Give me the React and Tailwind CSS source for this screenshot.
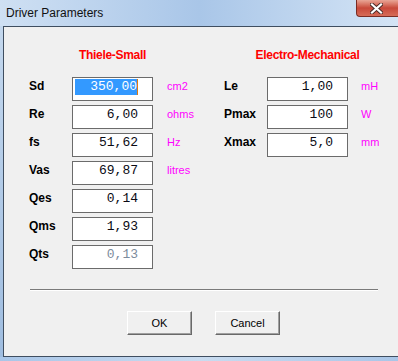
const leftRows = [
  { label: "Sd", value: "350,00", unit: "cm2", selected: true },
  { label: "Re", value: "6,00", unit: "ohms" },
  { label: "fs", value: "51,62", unit: "Hz" },
  { label: "Vas", value: "69,87", unit: "litres" },
  { label: "Qes", value: "0,14" },
  { label: "Qms", value: "1,93" },
  { label: "Qts", value: "0,13", disabled: true },
];

const rightRows = [
  { label: "Le", value: "1,00", unit: "mH" },
  { label: "Pmax", value: "100", unit: "W" },
  { label: "Xmax", value: "5,0", unit: "mm" },
];

function Field({ value, selected, disabled }) {
  return (
    <div className="h-6 w-[81px] border border-[#6b6b6b] bg-white flex justify-end items-start pt-px pr-[14px] font-['Liberation_Mono',monospace] text-[13px]">
      {selected ? (
        <>
          <span className="h-4 leading-4 bg-[#3399ff] text-white whitespace-pre">{"  " + value}</span>
          <span className="h-4 w-px bg-[#e07b10]" />
        </>
      ) : (
        <span className={disabled ? "leading-4 text-[#7c8b9c]" : "leading-4 text-[#0a0a14]"}>{value}</span>
      )}
    </div>
  );
}

function Group({ title, rows, unitGap }) {
  return (
    <div className="flex flex-col">
      <div className="ml-[43px] w-[81px] h-4 flex justify-center">
        <span className="whitespace-nowrap leading-4 text-[12px] font-bold tracking-[-0.3px] text-[#ff0000]">{title}</span>
      </div>
      <div className="mt-[14px] flex flex-col gap-1">
        {rows.map((r) => (
          <div key={r.label} className="flex items-start h-6">
            <div className="w-[43px] leading-[18px] text-[12px] font-bold text-black">{r.label}</div>
            <Field value={r.value} selected={r.selected} disabled={r.disabled} />
            {r.unit && (
              <div className={`${unitGap} leading-[18px] text-[11px] text-[#ff00ff]`}>{r.unit}</div>
            )}
          </div>
        ))}
      </div>
    </div>
  );
}

function WinButton({ children }) {
  return (
    <button className="w-[65px] h-6 bg-[#f0f0f0] border border-t-white border-l-white border-r-[#696969] border-b-[#696969] shadow-[inset_-1px_-1px_0_#a0a0a0] text-[11px] text-black leading-none">
      {children}
    </button>
  );
}

export default function App() {
  return (
    <div className="w-[398px] h-[361px] flex flex-col overflow-hidden bg-[#bcd3ec] font-['Liberation_Sans',Arial,sans-serif]">
      {/* title bar */}
      <div className="h-[26px] flex items-start justify-between bg-gradient-to-r from-[#cfe0f3] via-[#a9c6e8] to-[#d4e4f5]">
        <span className="pl-[6px] leading-[26px] text-[12px] text-[#111]">Driver Parameters</span>
        <div className="w-[42px] h-[17px] rounded-bl-[4px] border-l border-b border-[#7a2c24] bg-gradient-to-b from-[#e8a596] via-[#c8483a] to-[#d66c58] flex items-center justify-center pr-[3px]">
          <svg width="13" height="11" viewBox="0 0 13 11">
            <path d="M2 1.5 L11 9.5 M11 1.5 L2 9.5" stroke="#4a2a26" strokeWidth="4" strokeLinecap="square" />
            <path d="M2 1.5 L11 9.5 M11 1.5 L2 9.5" stroke="#ffffff" strokeWidth="2.2" strokeLinecap="square" />
          </svg>
        </div>
      </div>

      <div className="flex-1 flex">
        <div className="w-[3px] bg-gradient-to-b from-[#c4d8ee] to-[#9fbde0]" />
        {/* client area */}
        <div className="flex-1 flex flex-col bg-[#f0f0f0] border-l border-t border-b border-[#3f4e60]">
          <div className="flex pt-5 pl-[25px]">
            <div className="w-[195px]">
              <Group title="Thiele-Small" rows={leftRows} unitGap="ml-[14px]" />
            </div>
            <Group title="Electro-Mechanical" rows={rightRows} unitGap="ml-[13px]" />
          </div>

          <div className="mt-5 ml-[26px] w-[348px] border-t border-[#7a7a7a] border-b border-b-white" />

          <div className="mt-5 flex pl-[123px] gap-[23px]">
            <WinButton>OK</WinButton>
            <WinButton>Cancel</WinButton>
          </div>
        </div>
      </div>
      <div className="h-[4px] bg-gradient-to-r from-[#a9c6e8] via-[#c9dcf0] to-[#a9c6e8]" />
    </div>
  );
}
